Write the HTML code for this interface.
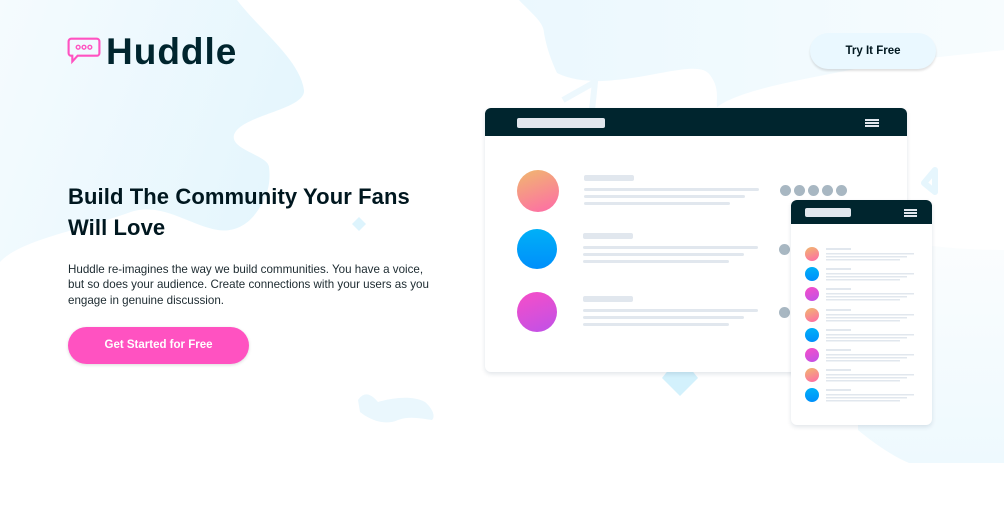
<!DOCTYPE html>
<html><head><meta charset="utf-8"><style>
*{margin:0;padding:0;box-sizing:border-box}
body{width:1004px;height:522px;overflow:hidden;background:#fff;position:relative;font-family:"Liberation Sans",sans-serif}
.abs{position:absolute}
h1{position:absolute;left:68px;top:181px;font-size:22px;line-height:31px;font-weight:bold;color:#00171f;letter-spacing:0.1px;width:380px}
p.t{position:absolute;left:68px;top:262px;font-size:11.6px;line-height:15.3px;color:#1c2a30;width:372px}
.btn{position:absolute;left:68px;top:327px;width:181px;height:37px;border-radius:19px;background:#ff52c1;color:#fff;font-weight:bold;font-size:11.5px;text-align:center;line-height:37px;box-shadow:0 1px 3px rgba(0,0,0,.15)}
.try{position:absolute;left:810px;top:33px;width:126px;height:36px;border-radius:18px;background:#eaf8ff;color:#00171f;font-weight:bold;font-size:11.5px;text-align:center;line-height:36px;box-shadow:0 2px 2px rgba(0,0,0,.12)}
.win{position:absolute;background:#fff;border-radius:6px;box-shadow:0 2px 5px rgba(0,40,70,.12);overflow:hidden}
.hd{background:#00252e;position:absolute;left:0;top:0;right:0}
.bar{position:absolute;background:#e1e7ee;border-radius:2px}
.c{position:absolute;border-radius:50%}
.o{background:linear-gradient(160deg,#f0b86e,#fe6aa8)}
.b{background:linear-gradient(180deg,#00b0f7,#008ffb)}
.m{background:linear-gradient(160deg,#f74ec7,#bf51e8)}
.g{position:absolute;width:11px;height:11px;border-radius:50%;background:#a8b7c2}
</style></head><body>
<svg class="abs" style="left:0;top:0" width="1004" height="522">
<defs>
<linearGradient id="lb" x1="0" y1="0" x2="1" y2="0.3"><stop offset="0" stop-color="#f5fbfe"/><stop offset="1" stop-color="#e5f6fd"/></linearGradient>
<linearGradient id="rb" x1="0" y1="0" x2="1" y2="0"><stop offset="0" stop-color="#ebf8fe"/><stop offset="1" stop-color="#f7fcfe"/></linearGradient>
<linearGradient id="br" x1="0" y1="0" x2="0" y2="1"><stop offset="0" stop-color="#fbfdfe"/><stop offset="1" stop-color="#eef9fe"/></linearGradient>
</defs>
<path d="M0 0 L237 0 C260 30 300 60 304 90 C306 110 240 115 234 135 C230 150 268 155 269 167 C272 190 262 205 256 213 C245 228 230 232 218 230 C190 226 160 200 128 213 C80 230 20 240 0 262 Z" fill="url(#lb)"/>
<path d="M519 0 C530 12 544 22 544 33 C547 50 552 62 557 73 C575 82 600 82 615 80 C660 76 700 60 710 75 C720 88 716 100 717 107 C740 90 800 80 850 70 C900 60 960 55 1004 50 L1004 0 Z" fill="url(#rb)"/>
<path d="M907 240 C930 250 1004 250 1004 250 L1004 463 L909 463 C890 455 870 440 858 430 L858 380 L907 372 Z" fill="url(#br)"/>
<path d="M358 400 C365 390 372 395 378 402 C392 398 412 395 425 402 C432 408 436 416 432 420 C420 418 408 416 398 420 C385 426 370 420 360 412 Z" fill="#eaf7fd"/>
<path d="M352 224 L359 217 L366 224 L359 231 Z" fill="#ddf4fd"/>
<path d="M662 378 L670 368 L690 368 L698 378 L680 396 Z" fill="#d3f1fc"/>
<path d="M563 100 L595 82 L592 110" fill="none" stroke="#edf8fd" stroke-width="6" stroke-linejoin="round"/>
<path d="M935 170 L924 183 L935 192 Z" fill="none" stroke="#e6f6fd" stroke-width="6" stroke-linejoin="round"/>
</svg>
<svg class="abs" style="left:67px;top:37px" width="34" height="30" viewBox="0 0 32 28"><path d="M4 1.5 H28 A2.5 2.5 0 0 1 30.5 4 V15 A2.5 2.5 0 0 1 28 17.5 H10 L5 23 V17.5 H4 A2.5 2.5 0 0 1 1.5 15 V4 A2.5 2.5 0 0 1 4 1.5 Z" fill="none" stroke="#ff52c1" stroke-width="2"/><circle cx="10.5" cy="9.5" r="1.8" fill="none" stroke="#ff52c1" stroke-width="1.3"/><circle cx="16" cy="9.5" r="1.8" fill="none" stroke="#ff52c1" stroke-width="1.3"/><circle cx="21.5" cy="9.5" r="1.8" fill="none" stroke="#ff52c1" stroke-width="1.3"/></svg>
<div class="abs" style="left:106px;top:30px;font-size:37px;line-height:44px;font-weight:bold;color:#00252e;letter-spacing:1px">Huddle</div>
<div class="try">Try It Free</div>
<h1>Build The Community Your Fans Will Love</h1>
<p class="t">Huddle re-imagines the way we build communities. You have a voice, but so does your audience. Create connections with your users as you engage in genuine discussion.</p>
<div class="btn">Get Started for Free</div>

<div class="win" style="left:485px;top:108px;width:422px;height:264px">
 <div class="hd" style="height:28px"></div>
 <div class="bar" style="left:32px;top:10px;width:88px;height:10px"></div>
 <div class="abs" style="left:380px;top:11px;width:14px;height:2px;background:#e1e7ee;box-shadow:0 3px 0 #e1e7ee,0 6px 0 #e1e7ee"></div>
 <div class="c o" style="left:32px;top:62px;width:42px;height:42px"></div>
 <div class="c b" style="left:32px;top:121px;width:40px;height:40px"></div>
 <div class="c m" style="left:32px;top:184px;width:40px;height:40px"></div>
 <div class="bar" style="left:99px;top:67px;width:50px;height:6px"></div>
 <div class="bar" style="left:99px;top:80px;width:175px;height:3px"></div>
 <div class="bar" style="left:99px;top:87px;width:161px;height:3px"></div>
 <div class="bar" style="left:99px;top:94px;width:146px;height:3px"></div>
 <div class="bar" style="left:98px;top:125px;width:50px;height:6px"></div>
 <div class="bar" style="left:98px;top:138px;width:175px;height:3px"></div>
 <div class="bar" style="left:98px;top:145px;width:161px;height:3px"></div>
 <div class="bar" style="left:98px;top:152px;width:146px;height:3px"></div>
 <div class="bar" style="left:98px;top:188px;width:50px;height:6px"></div>
 <div class="bar" style="left:98px;top:201px;width:175px;height:3px"></div>
 <div class="bar" style="left:98px;top:208px;width:161px;height:3px"></div>
 <div class="bar" style="left:98px;top:215px;width:146px;height:3px"></div>
 <div class="g" style="left:295px;top:77px"></div><div class="g" style="left:309px;top:77px"></div><div class="g" style="left:323px;top:77px"></div><div class="g" style="left:337px;top:77px"></div><div class="g" style="left:351px;top:77px"></div>
 <div class="g" style="left:294px;top:136px"></div>
 <div class="g" style="left:294px;top:199px"></div>
</div>

<div class="win" style="left:791px;top:200px;width:141px;height:225px">
 <div class="hd" style="height:24px"></div>
 <div class="bar" style="left:14px;top:8px;width:46px;height:9px"></div>
 <div class="abs" style="left:113px;top:9px;width:13px;height:2px;background:#e1e7ee;box-shadow:0 3px 0 #e1e7ee,0 6px 0 #e1e7ee"></div>
 <div style="position:absolute;left:14px;top:47px">
  <div class="c o" style="left:0;top:0;width:14px;height:14px"></div>
  <div class="c b" style="left:0;top:20px;width:14px;height:14px"></div>
  <div class="c m" style="left:0;top:40px;width:14px;height:14px"></div>
  <div class="c o" style="left:0;top:61px;width:14px;height:14px"></div>
  <div class="c b" style="left:0;top:81px;width:14px;height:14px"></div>
  <div class="c m" style="left:0;top:101px;width:14px;height:14px"></div>
  <div class="c o" style="left:0;top:121px;width:14px;height:14px"></div>
  <div class="c b" style="left:0;top:141px;width:14px;height:14px"></div>
 </div>
 <svg class="abs" style="left:35px;top:48px" width="90" height="160">
  <g fill="#e1e7ee">
   <rect x="0" y="0" width="25" height="2"/><rect x="0" y="5" width="88" height="1.5"/><rect x="0" y="8" width="81" height="1.5"/><rect x="0" y="11" width="74" height="1.5"/>
   <rect x="0" y="20" width="25" height="2"/><rect x="0" y="25" width="88" height="1.5"/><rect x="0" y="28" width="81" height="1.5"/><rect x="0" y="31" width="74" height="1.5"/>
   <rect x="0" y="40" width="25" height="2"/><rect x="0" y="45" width="88" height="1.5"/><rect x="0" y="48" width="81" height="1.5"/><rect x="0" y="51" width="74" height="1.5"/>
   <rect x="0" y="61" width="25" height="2"/><rect x="0" y="66" width="88" height="1.5"/><rect x="0" y="69" width="81" height="1.5"/><rect x="0" y="72" width="74" height="1.5"/>
   <rect x="0" y="81" width="25" height="2"/><rect x="0" y="86" width="88" height="1.5"/><rect x="0" y="89" width="81" height="1.5"/><rect x="0" y="92" width="74" height="1.5"/>
   <rect x="0" y="101" width="25" height="2"/><rect x="0" y="106" width="88" height="1.5"/><rect x="0" y="109" width="81" height="1.5"/><rect x="0" y="112" width="74" height="1.5"/>
   <rect x="0" y="121" width="25" height="2"/><rect x="0" y="126" width="88" height="1.5"/><rect x="0" y="129" width="81" height="1.5"/><rect x="0" y="132" width="74" height="1.5"/>
   <rect x="0" y="141" width="25" height="2"/><rect x="0" y="146" width="88" height="1.5"/><rect x="0" y="149" width="81" height="1.5"/><rect x="0" y="152" width="74" height="1.5"/>
  </g>
 </svg>
</div>
</body></html>
